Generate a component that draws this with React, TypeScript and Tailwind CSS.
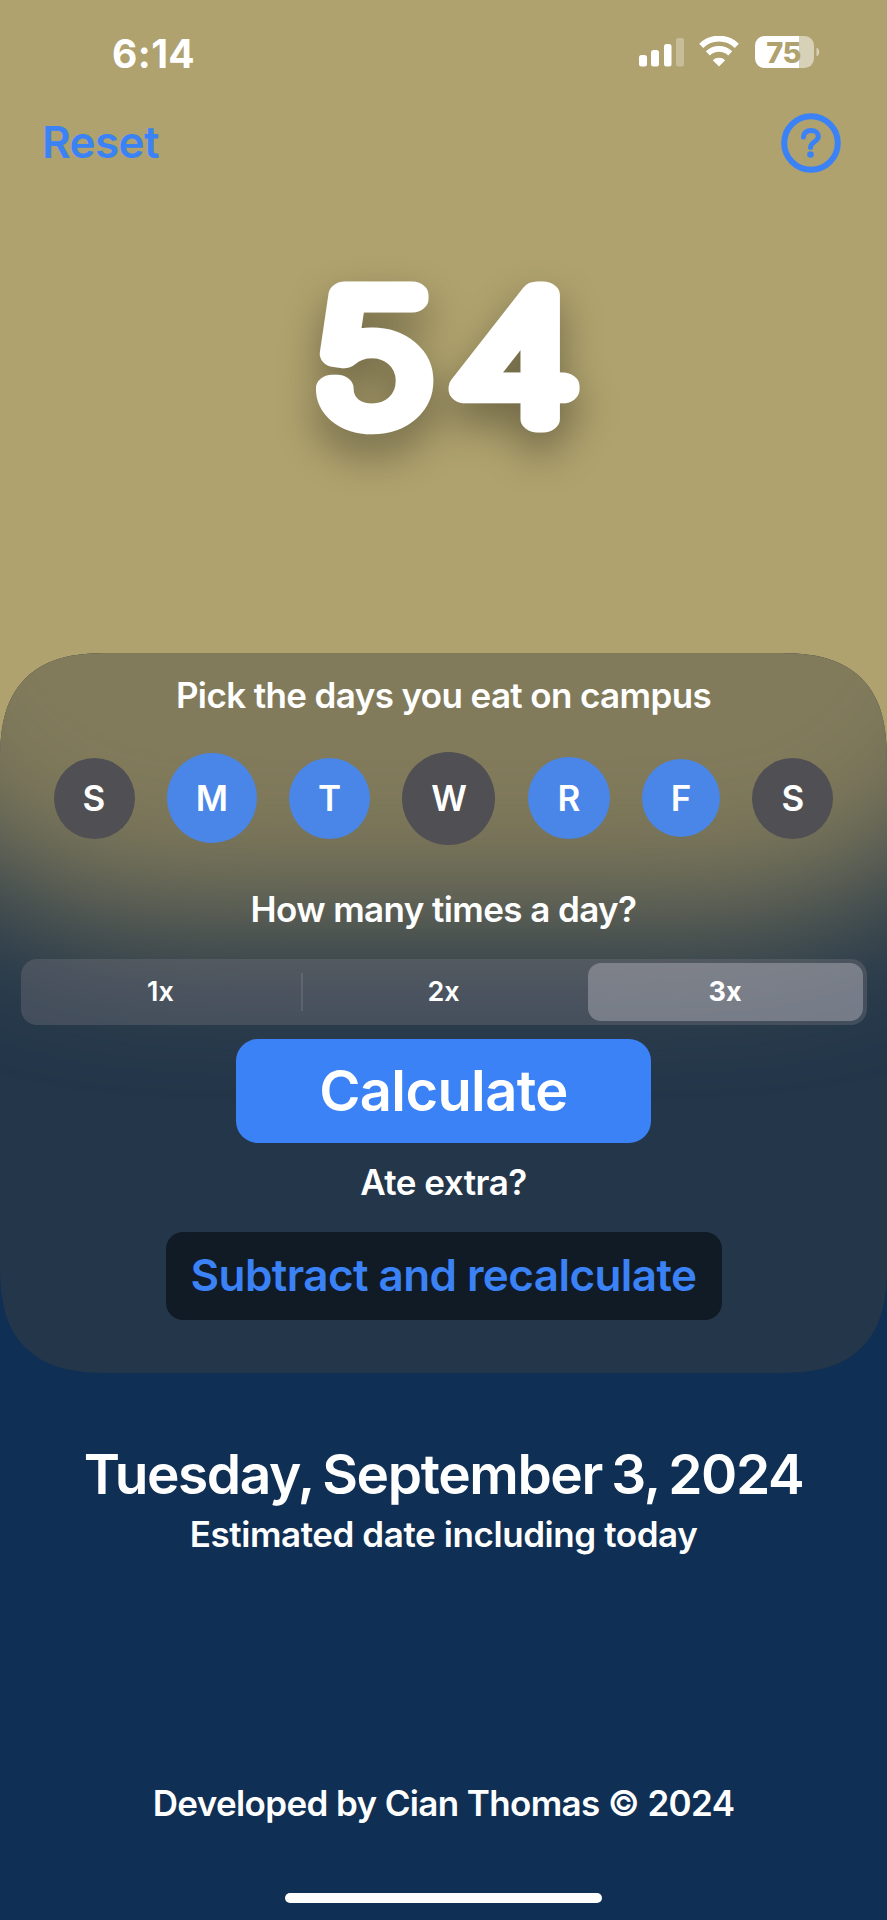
import React from "react";

const days = [
  { label: "S", on: false, box: "h-[81px] w-[81px]" },
  { label: "M", on: true, box: "h-[90px] w-[90px]" },
  { label: "T", on: true, box: "h-[81px] w-[81px]" },
  { label: "W", on: false, box: "h-[93px] w-[93px]" },
  { label: "R", on: true, box: "h-[82px] w-[82px]" },
  { label: "F", on: true, box: "h-[78px] w-[78px]" },
  { label: "S", on: false, box: "h-[81px] w-[81px]" },
];

function StatusIcons() {
  return (
    <svg width="184" height="36" viewBox="0 0 184 36" fill="#fff">
      <rect x="1" y="19" width="8" height="11.5" rx="2.500" />
      <rect x="13" y="14" width="8" height="16.5" rx="2.500" />
      <rect x="26" y="8" width="7.5" height="22.5" rx="2.500" />
      <rect x="38" y="2" width="8" height="28.5" rx="2.500" opacity="0.3" />
      <g fill="none" stroke="#fff" strokeWidth="5.800">
        <path d="M63.200 9.800 A25.500 25.500 0 0 1 98.800 9.800" />
        <path d="M69.800 17.300 A16.500 16.500 0 0 1 92.200 17.300" />
      </g>
      <path d="M81 30.5 L74.8 24.2 A9 9 0 0 1 87.2 24.2 Z" />
      <clipPath id="battery">
        <rect x="117" y="0" width="59" height="32" rx="9.5" />
      </clipPath>
      <g clipPath="url(#battery)">
        <rect x="117" y="0" width="44" height="32" />
        <rect x="161" y="0" width="15" height="32" opacity="0.5" />
      </g>
      <path d="M178.500 11.500 A5 5 0 0 1 178.500 20.500 Z" opacity="0.5" />
      <text x="145.500" y="26.500" textAnchor="middle" fontSize="29" fontWeight="800" fontFamily="Inter, sans-serif" letterSpacing="-0.5" fill="#afa26e">75</text>
    </svg>
  );
}

export default function App() {
  return (
    <main className="flex h-[1920px] w-[887px] flex-col bg-[linear-gradient(#afa26e_0_960px,#0f2f54_960px)] font-['Inter',sans-serif] font-semibold text-white">
      <header className="flex h-[104px] items-start justify-between pr-[65px] pl-[112px] pt-[36px]">
        <span className="text-[39px] leading-[35px] font-bold tracking-[0.4px]">6:14</span>
        <StatusIcons />
      </header>
      <nav className="flex h-[78px] items-center justify-between pr-[46px] pl-[42px]">
        <button className="-mt-[2px] text-[44px] tracking-[-0.6px] text-[#3b82f6]">Reset</button>
        <svg width="60" height="60" viewBox="0 0 60 60" fill="none" stroke="#3b82f6" strokeLinecap="round" strokeLinejoin="round">
          <circle cx="30" cy="30" r="26.800" strokeWidth="6" />
          <path d="M22.500 24 C23 19.500 26 17.600 30 17.600 C34.500 17.600 37.300 20 37.300 23.500 C37.300 29 29.500 28.500 29.500 34.500" strokeWidth="5" />
          <circle cx="29.500" cy="41.500" r="3.300" fill="#3b82f6" stroke="none" />
        </svg>
      </nav>
      <div className="flex h-[471px] justify-center pt-[58px]">
        <svg width="400" height="260" viewBox="244 240 400 260" className="overflow-visible drop-shadow-[0_20px_20px_rgba(0,0,0,0.36)]">
          <g textAnchor="middle" fontFamily="Inter, sans-serif" fontWeight="100" fontSize="170" fill="#fff" stroke="#fff" strokeWidth="27" strokeLinejoin="round">
            <text transform="translate(373.500 418.500) scale(1.22 1)">5</text>
            <text transform="translate(514 418.500) scale(1.27 1)">4</text>
          </g>
        </svg>
      </div>
      <section className="relative isolate flex h-[720px] flex-col items-center overflow-hidden rounded-[90px] bg-[#24374a] supports-[corner-shape:superellipse(1.4)]:rounded-[110px] [corner-shape:superellipse(1.4)]">
        <div className="absolute -top-[370px] -left-[157px] -z-10 h-[640px] w-[1200px] rounded-full bg-[#827b5b] blur-[74px]" />
        <h2 className="mt-[20px] text-[35px] leading-[44px] tracking-[-0.62px]">Pick the days you eat on campus</h2>
        <div className="mt-[34px] flex h-[94px] w-[780px] items-center justify-between">
          {days.map((d, i) => (
            <button key={i} className={`${d.box} ${d.on ? "bg-[#4a86e8]" : "bg-[#504f54]"} flex items-center justify-center rounded-full text-[35px]`}>
              {d.label}
            </button>
          ))}
        </div>
        <h2 className="mt-[42px] text-[35px] leading-[44px] tracking-[-0.6px]">How many times a day?</h2>
        <div className="mt-[28px] grid h-[66px] w-[846px] grid-cols-3 items-center rounded-[16px] bg-[#787680]/35 text-[27px]">
          <span className="flex h-[38px] items-center justify-center border-r-2 border-white/10">1x</span>
          <span className="text-center">2x</span>
          <span className="mr-[4px] ml-[3px] flex h-[58px] items-center justify-center rounded-[13px] bg-[#b4b4bd]/45 font-bold">3x</span>
        </div>
        <button className="mt-[14px] h-[104px] w-[415px] rounded-[22px] bg-[#3b82f6] text-[56px] tracking-[-0.6px]">Calculate</button>
        <h2 className="mt-[17px] text-[35px] leading-[44px] tracking-[-0.5px]">Ate extra?</h2>
        <button className="mt-[28px] h-[88px] w-[556px] rounded-[17px] bg-[#101b25] pb-[3px] text-[44px] tracking-[-0.57px] text-[#3b82f6]">Subtract and recalculate</button>
      </section>
      <h1 className="mt-[69px] text-center text-[55px] leading-[64px] tracking-[-1.4px] [word-spacing:-3px]">Tuesday, September 3, 2024</h1>
      <p className="mt-[6px] text-center text-[35px] leading-[44px] tracking-[-0.42px]">Estimated date including today</p>
      <footer className="mt-auto flex flex-col items-center pb-[17px]">
        <p className="text-[35px] leading-[44px] tracking-[-0.63px]">Developed by Cian Thomas © 2024</p>
        <div className="mt-[68px] h-[10px] w-[317px] rounded-full bg-white" />
      </footer>
    </main>
  );
}
